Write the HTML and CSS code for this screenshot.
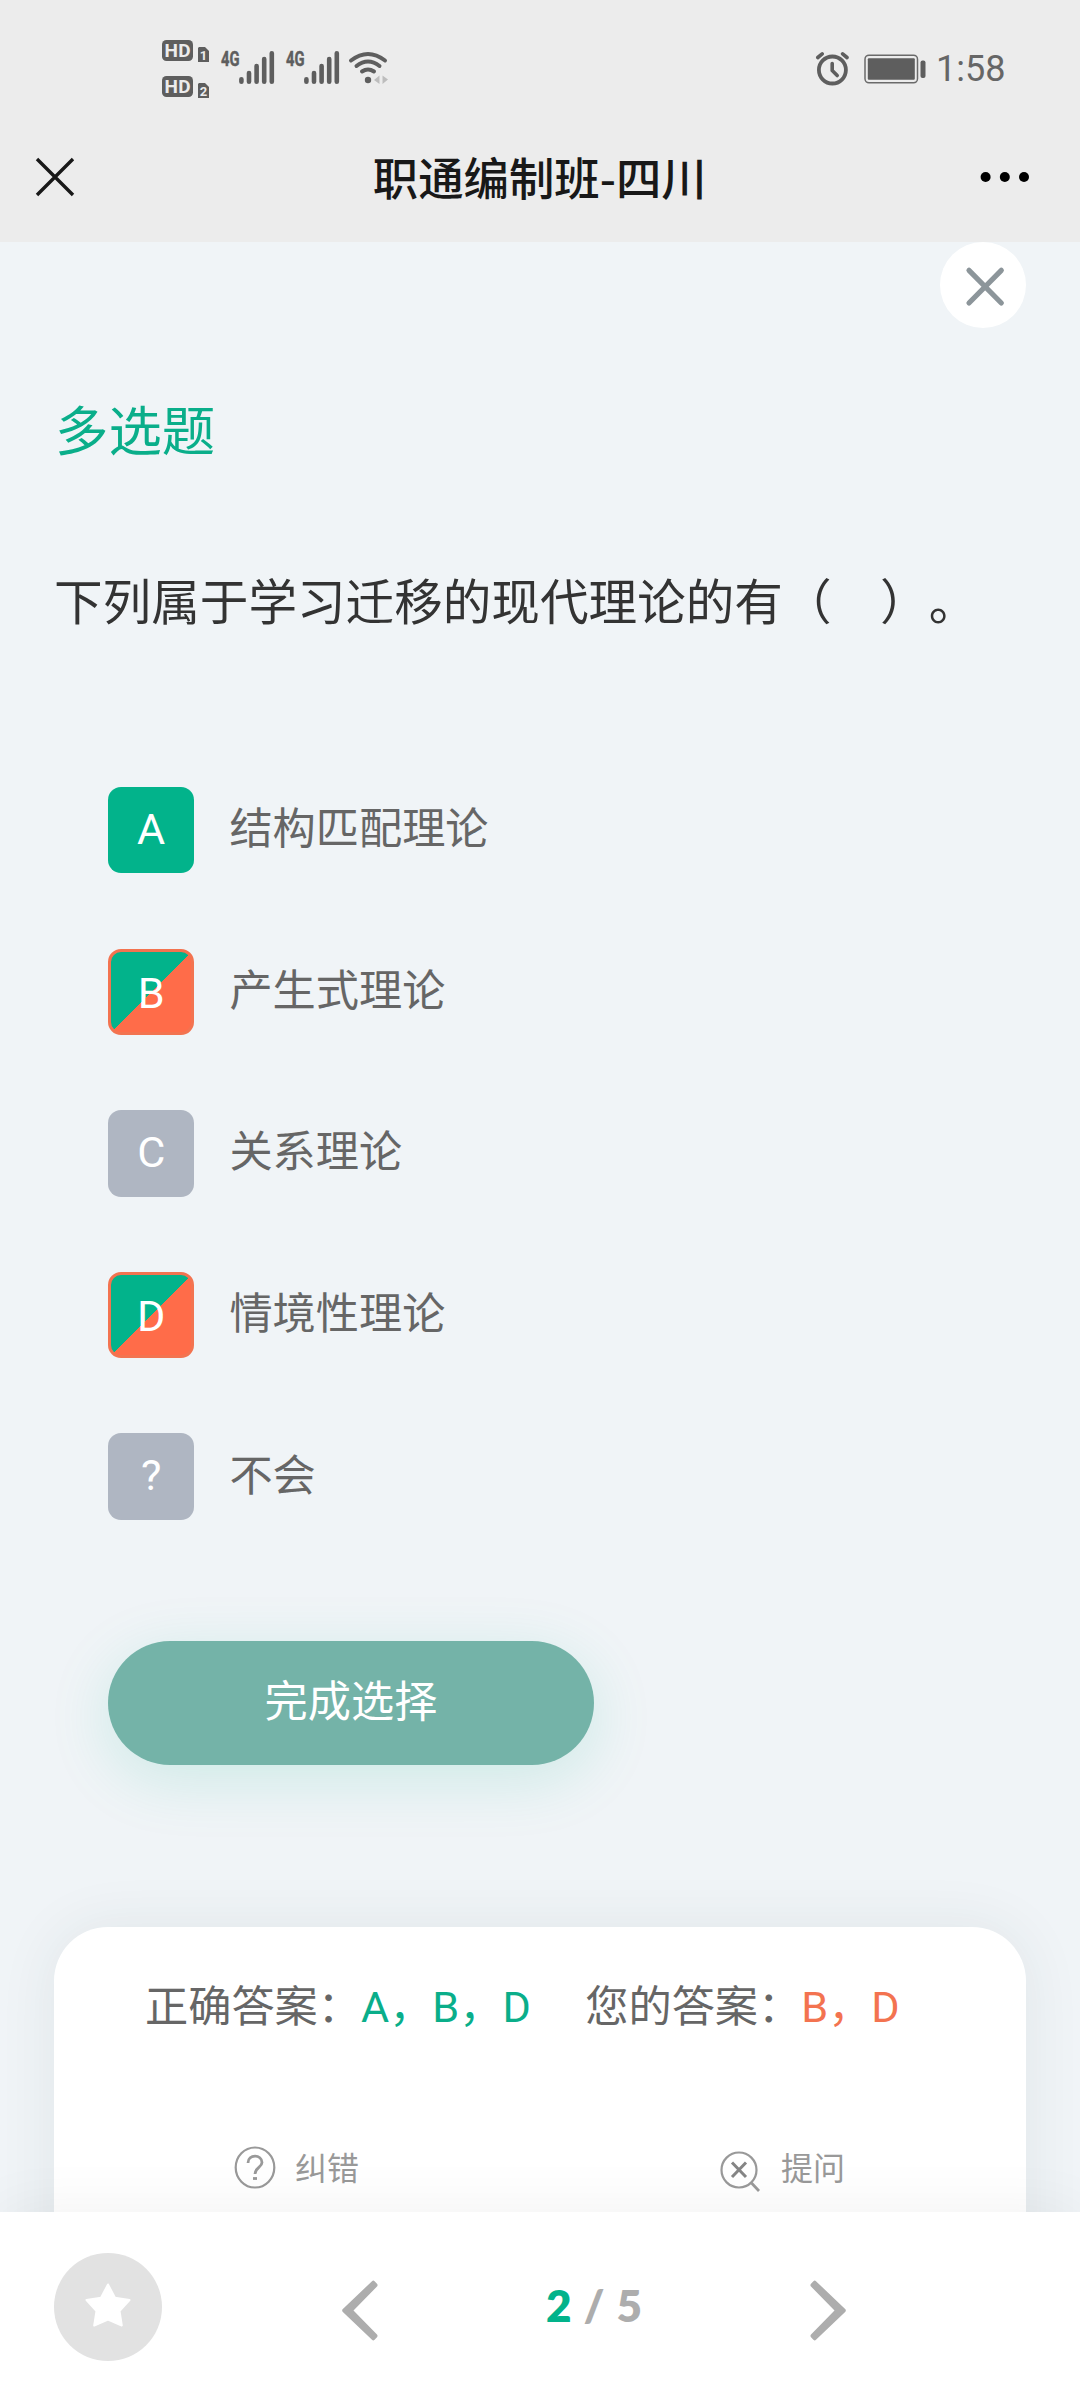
FILE: index.html
```html
<!DOCTYPE html>
<html lang="zh-CN">
<head>
<meta charset="utf-8">
<title>职通编制班-四川</title>
<link rel="stylesheet" href="styles.css">
</head>
<body>
<div class="screen">
  <header class="top">
    <div class="status">
      <svg class="status-left" width="240" height="70" viewBox="155 34 240 70">
        <g fill="#5e5e5e">
          <rect x="162" y="40" width="31" height="21" rx="4.5"/>
          <rect x="162" y="76" width="31" height="21" rx="4.5"/>
          <path d="M199 47h6l4 4v11h-11v-14z"/>
          <path d="M199 83h6l4 4v11h-11v-14z"/>
        </g>
        <g class="hd"><text x="164.5" y="57" textLength="26">HD</text><text x="164.5" y="93" textLength="26">HD</text></g>
        <g class="sim"><text x="203.4" y="59.5">1</text><text x="203.4" y="95.5">2</text></g>
        <g class="net"><text x="221" y="65.5" textLength="18.5" lengthAdjust="spacingAndGlyphs">4G</text><text x="286" y="65.5" textLength="18.5" lengthAdjust="spacingAndGlyphs">4G</text></g>
        <g stroke="#5e5e5e" stroke-width="4.6" stroke-linecap="round">
          <path d="M241.4 79.3V81.7M249 73V81.7M256.6 66V81.7M264.2 59V81.7M271.8 53.3V81.7"/>
          <path d="M306.4 79.3V81.7M314 73V81.7M321.6 66V81.7M329.2 59V81.7M336.8 53.3V81.7"/>
        </g>
        <g fill="none" stroke="#5e5e5e" stroke-width="4" stroke-linecap="round">
          <path d="M351 60.5Q368 47.500 385 60.500M356.500 66Q368 57 379.500 66M362 71.500Q368 67.500 374 71.500"/>
        </g>
        <circle cx="368" cy="80" r="3.2" fill="#5e5e5e"/>
        <path d="M379.500 75.500V84L374 80zM382.500 75.500L388 79.500L382.500 84z" fill="#bdbdbd"/>
      </svg>
      <div class="status-right">
        <svg width="34" height="36" viewBox="815 51 34 36" fill="none" stroke="#5e5e5e" stroke-linecap="round" stroke-linejoin="round">
          <circle cx="832.400" cy="70" r="13.500" stroke-width="3.800"/>
          <path d="M832.200 63.500V70.500L837.200 75.500" stroke-width="3.600"/>
          <path d="M817.800 57.500L822.200 53.800M847 57.500L842.600 53.800" stroke-width="3.600"/>
        </svg>
        <svg width="62" height="30" viewBox="864.500 53.500 62 30">
          <rect x="865.500" y="54.700" width="52.500" height="27.600" rx="4" fill="none" stroke="#6a6a6a" stroke-width="1.500"/>
          <rect x="868.300" y="57.800" width="47" height="21.400" rx="1" fill="#5e5e5e"/>
          <rect x="921" y="60" width="5" height="17.500" rx="2" fill="#5e5e5e"/>
        </svg>
        <span class="time">1:58</span>
      </div>
    </div>
    <div class="nav">
      <svg width="40" height="40" viewBox="34.500 156.500 40 40"><path d="M36.500 158.500L72.500 194.500M72.500 158.500L36.500 194.500" stroke="#181818" stroke-width="3.400"/></svg>
      <h1 class="title">职通编制班-四川</h1>
      <svg width="50" height="12" viewBox="980 170.300 50 12"><circle cx="985.600" cy="176.300" r="5"/><circle cx="1004.800" cy="176.300" r="5"/><circle cx="1024" cy="176.300" r="5"/></svg>
    </div>
  </header>

  <main class="page">
    <button class="close">
      <svg width="86" height="86" viewBox="0 0 86 86"><path d="M29 28.300L61.300 61M61.300 28.300L29 61" stroke="#8c959a" stroke-width="5.200" stroke-linecap="round"/></svg>
    </button>
    <h2 class="kind">多选题</h2>
    <p class="question">下列属于学习迁移的现代理论的有（　）。</p>
    <ul class="options">
      <li><span class="key right">A</span><span class="label">结构匹配理论</span></li>
      <li><span class="key both">B</span><span class="label">产生式理论</span></li>
      <li><span class="key">C</span><span class="label">关系理论</span></li>
      <li><span class="key both">D</span><span class="label">情境性理论</span></li>
      <li><span class="key">?</span><span class="label">不会</span></li>
    </ul>
    <button class="submit">完成选择</button>
    <section class="card">
      <div class="answers">
        <p>正确答案：<span class="green">A，B，D</span></p>
        <p>您的答案：<span class="orange">B，D</span></p>
      </div>
      <div class="actions">
        <div class="action">
          <svg width="44" height="44" viewBox="0 0 44 44" fill="none" stroke="#999" stroke-width="2.200"><ellipse cx="22" cy="21.500" rx="19.300" ry="20"/><path d="M15 17C15 8 29 8 29 16.500C29 21.500 22 21.500 22 28" stroke-width="2.800"/><path d="M20 32.500h4" stroke-width="2.800"/></svg>
          <span>纠错</span>
        </div>
        <div class="action">
          <svg class="lens" width="44" height="44" viewBox="0 0 44 44" fill="none" stroke="#999" stroke-width="2.200"><circle cx="20" cy="21" r="17.500"/><path d="M32.500 34L40 42" stroke-width="2.800"/><path d="M13 13.500L27 28M27 13.500L13 28" stroke="#858585" stroke-width="3"/></svg>
          <span>提问</span>
        </div>
      </div>
    </section>
  </main>

  <footer class="bar">
    <button class="star">
      <svg width="46" height="44" viewBox="0 0 46 44"><path d="M23 1.500L30 14.800L44.500 17L34.500 28L36.800 42.500L23 36.500L9.200 42.500L11.500 28L1.500 17L16 14.800Z" fill="#fff" stroke="#fff" stroke-width="2" stroke-linejoin="round"/></svg>
    </button>
    <svg class="prev" width="36" height="61" viewBox="0 0 36 61"><path d="M30 1.200Q31.300 0 32.600 1.200L35.200 4Q36 5.300 35 6.500L11.500 30.500L35 54.500Q36 55.700 35.200 57L32.600 59.800Q31.300 61 30 59.800L.600 31.700Q-.300 30.500 .600 29.300Z" fill="#adadad"/></svg>
    <div class="pager"><span class="now">2</span><span>/</span><span>5</span></div>
    <svg class="next" width="36" height="61" viewBox="0 0 36 61"><path d="M6 1.200Q4.700 0 3.400 1.200L.800 4Q0 5.300 1 6.500L24.500 30.500L1 54.500Q0 55.700 .800 57L3.400 59.800Q4.700 61 6 59.800L35.400 31.700Q36.300 30.500 35.400 29.300Z" fill="#adadad"/></svg>
  </footer>
</div>
</body>
</html>
```
FILE: styles.css
```css
* { box-sizing: border-box; }
body, h1, h2, p, ul { margin: 0; padding: 0; }
body {
  font-family: Roboto, "Noto Sans CJK SC", sans-serif;
  background: #f0f4f7;
  text-spacing-trim: space-all;
}
button { border: 0; padding: 0; font: inherit; }
svg { display: block; flex: none; }
.screen {
  width: 1080px;
  height: 2400px;
  overflow: hidden;
  display: flex;
  flex-direction: column;
}
.top { height: 242px; flex: none; background: #ececec; }
.status {
  height: 138px;
  padding: 0 76px 0 155px;
  display: flex;
  justify-content: space-between;
}
.status-left { margin-top: 34px; }
.status-right {
  height: 36px;
  margin-top: 51px;
  display: flex;
  align-items: center;
}
.status-right svg + svg { margin-left: 15px; }
.time {
  width: 68px;
  margin-left: 10px;
  font-size: 36px;
  line-height: 36px;
  color: #666;
  white-space: nowrap;
}
.hd { font: 700 19px Roboto, sans-serif; fill: #ececec; }
.sim { font: 700 13px Roboto, sans-serif; fill: #ececec; text-anchor: middle; }
.net { font: 700 21px Roboto, sans-serif; fill: #5e5e5e; stroke: #5e5e5e; stroke-width: .5px; }
.nav {
  height: 77px;
  padding: 0 50px 0 34.5px;
  display: flex;
  align-items: center;
}
.title {
  flex: 1;
  padding-left: 25px;
  text-align: center;
  font-size: 45.4px;
  line-height: 77px;
  font-weight: 500;
  font-family: "Noto Sans CJK SC", sans-serif;
  color: #181818;
}
.page {
  height: 1970px;
  flex: none;
  overflow: hidden;
  display: flex;
  flex-direction: column;
  padding: 0 54px;
}
.close {
  width: 86px;
  height: 86px;
  flex: none;
  align-self: flex-end;
  border-radius: 50%;
  background: #fff;
}
.kind {
  margin-top: 65px;
  margin-left: 1px;
  font-size: 53.4px;
  line-height: 80px;
  font-weight: 400;
  color: #0aae8a;
}
.question {
  margin-top: 95px;
  font-size: 48.6px;
  line-height: 72px;
  color: #333;
  white-space: nowrap;
}
.options {
  list-style: none;
  margin-top: 147px;
  margin-left: 54px;
  display: flex;
  flex-direction: column;
  gap: 75.2px;
}
.options li { display: flex; height: 86.4px; align-items: center; }
.key {
  width: 86.4px;
  height: 86.4px;
  border-radius: 13px;
  background: #afb6c2;
  color: #fff;
  font-size: 43.2px;
  line-height: 86px;
  text-align: center;
}
.right { background: #02b38b; }
.both {
  border: 3px solid #f37350;
  background: linear-gradient(135deg, #02b38b 50%, #ff6c49 50.5%);
  line-height: 84px;
}
.label {
  margin-left: 35px;
  font-size: 43.2px;
  line-height: 60px;
  color: #666;
}
.submit {
  width: 486px;
  height: 124px;
  flex: none;
  margin: 121px 0 0 54px;
  padding-bottom: 9px;
  border-radius: 62px;
  background: #74b3a8;
  color: #fff;
  font-size: 43.2px;
  box-shadow: 0 14px 62px rgba(0, 178, 138, .15);
}
.card {
  height: 420px;
  flex: none;
  margin-top: 162px;
  border-radius: 54px;
  background: #fff;
  box-shadow: 0 0 58px rgba(40, 60, 70, .08);
}
.answers {
  padding: 51px 0 0 91px;
  display: flex;
  gap: 54.5px;
  font-size: 43.2px;
  line-height: 60px;
  color: #666;
  white-space: nowrap;
}
.green { color: #0aae8a; }
.orange { color: #f37350; }
.actions { display: flex; margin-top: 108px; }
.action {
  width: 486px;
  height: 44px;
  padding-left: 179px;
  display: flex;
  align-items: center;
  gap: 18px;
  font-size: 32px;
  line-height: 44px;
  color: #999;
}
.action span { padding-top: 3px; }
.lens { margin-top: 6px; }
.bar {
  position: relative;
  height: 188px;
  flex: none;
  padding: 41px 0 0 54px;
  display: flex;
  background: #fff;
  box-shadow: 0 0 58px rgba(0, 0, 0, .06);
}
.star {
  width: 108px;
  height: 108px;
  flex: none;
  display: flex;
  align-items: center;
  justify-content: center;
  padding-bottom: 4px;
  border-radius: 50%;
  background: #e2e2e2;
}
.prev { margin: 27px 0 0 180px; }
.pager {
  width: 96px;
  margin: 26px 0 0 168px;
  display: flex;
  justify-content: space-between;
  font-family: Lato, sans-serif;
  font-size: 44px;
  line-height: 52px;
  font-weight: 800;
  color: #adadad;
}
.now { color: #02b38b; }
.next { margin: 27px 0 0 168px; }
```
